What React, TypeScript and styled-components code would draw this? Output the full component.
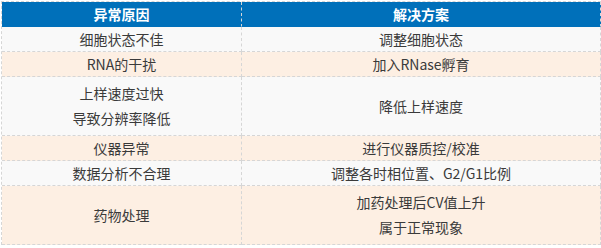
import React from "react";
import styled, { createGlobalStyle } from "styled-components";

const Global = createGlobalStyle`
  html, body { margin: 0; padding: 0; background: #ffffff; }
  body { font-family: "Noto Sans CJK SC", "Noto Sans", sans-serif; }
`;

const Wrap = styled.div`
  padding: 1px 0 0 1px;
`;

const Table = styled.table`
  width: 600px;
  border-collapse: separate;
  border-spacing: 0;
  table-layout: fixed;
  border-top: 1px dashed #d6d6d6;
  border-left: 1px dashed #d6d6d6;
  font-size: 14px;
  color: #3a3a3a;
`;

const Th = styled.th`
  background: #0070ba;
  color: #ffffff;
  font-weight: 700;
  font-size: 14px;
  height: 24px;
  line-height: 24px;
  padding: 0;
  text-align: center;
  border-right: 1px dashed #d6d6d6;
  border-bottom: 1px solid #0070ba;
`;

const Row = styled.tr<{ $alt?: boolean }>`
  background: ${(p) => (p.$alt ? "#fdefe3" : "#f9f9f9")};
`;

const Td = styled.td<{ $multi?: boolean }>`
  text-align: center;
  vertical-align: middle;
  padding: ${(p) => (p.$multi ? "4px 0" : "0")};
  height: ${(p) => (p.$multi ? "50px" : "24px")};
  line-height: ${(p) => (p.$multi ? "25px" : "24px")};
  border-right: 1px dashed #d6d6d6;
  border-bottom: 1px dashed #d6d6d6;
`;

const Line = styled.div`
  line-height: 25px;
`;

type RowData = { cause: string[]; fix: string[] };

const rows: RowData[] = [
  { cause: ["细胞状态不佳"], fix: ["调整细胞状态"] },
  { cause: ["RNA的干扰"], fix: ["加入RNase孵育"] },
  { cause: ["上样速度过快", "导致分辨率降低"], fix: ["降低上样速度"] },
  { cause: ["仪器异常"], fix: ["进行仪器质控/校准"] },
  { cause: ["数据分析不合理"], fix: ["调整各时相位置、G2/G1比例"] },
  { cause: ["药物处理"], fix: ["加药处理后CV值上升", "属于正常现象"] },
];

const Cell: React.FC<{ lines: string[]; multi: boolean }> = ({ lines, multi }) => (
  <Td $multi={multi}>
    {lines.length > 1 ? lines.map((l) => <Line key={l}>{l}</Line>) : lines[0]}
  </Td>
);

export default function App() {
  return (
    <>
      <Global />
      <Wrap>
        <Table>
          <colgroup>
            <col style={{ width: 240 }} />
            <col />
          </colgroup>
          <thead>
            <tr>
              <Th>异常原因</Th>
              <Th>解决方案</Th>
            </tr>
          </thead>
          <tbody>
            {rows.map((r, i) => {
              const multi = r.cause.length > 1 || r.fix.length > 1;
              return (
                <Row key={i} $alt={i % 2 === 1}>
                  <Cell lines={r.cause} multi={multi} />
                  <Cell lines={r.fix} multi={multi} />
                </Row>
              );
            })}
          </tbody>
        </Table>
      </Wrap>
    </>
  );
}
